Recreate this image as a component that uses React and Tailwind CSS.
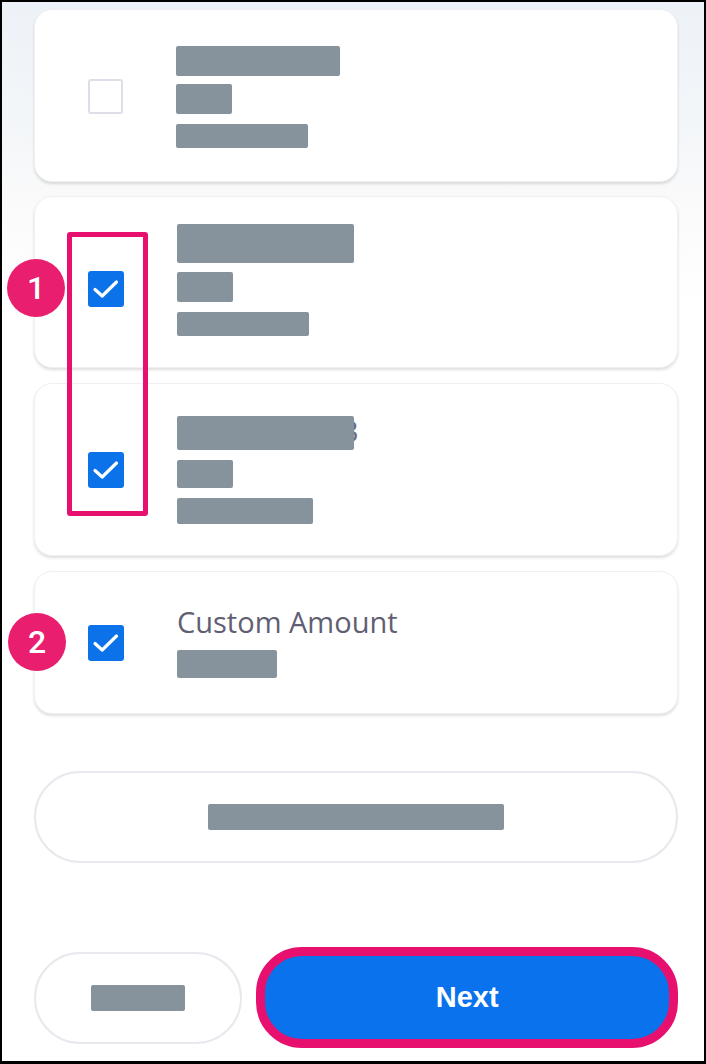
import React from "react";

const Bar = ({ w, h, className = "" }) => (
  <div className={`rounded-[2px] bg-[#87939c] ${className}`} style={{ width: w, height: h }} />
);

const Check = ({ checked }) =>
  checked ? (
    <div className="relative h-[36px] w-[36px] shrink-0 rounded-[3px] bg-[#0b72ea]">
      <svg className="absolute left-0 top-0 h-[36px] w-[36px]" width="36" height="36" viewBox="0 0 36 36" fill="none">
        <path d="M7 18.5L14.2 25L28.5 11" stroke="#ffffff" strokeWidth="3.2" strokeLinecap="round" strokeLinejoin="round" />
      </svg>
    </div>
  ) : (
    <div className="h-[35px] w-[35px] shrink-0 rounded-[3px] border-[2px] border-[#dedde8] bg-white" />
  );

const Card = ({ h, children }) => (
  <div
    className="flex rounded-[18px] border border-[#f0f0f3] bg-white pl-[53px] shadow-[0_2px_3px_rgba(0,0,0,0.13)]"
    style={{ height: h }}
  >
    {children}
  </div>
);

const Badge = ({ n, className }) => (
  <div
    className={`absolute flex h-[58px] w-[58px] items-center justify-center rounded-full bg-[#e91e6e] text-[32px] font-medium text-white ${className}`}
    style={{ fontFamily: 'Roboto, "Liberation Sans", Arial, sans-serif' }}
  >
    {n}
  </div>
);

export default function App() {
  return (
    <div
      className="relative h-[1064px] w-[706px] overflow-hidden border-[2px] border-b-[3px] border-black bg-[linear-gradient(180deg,#edf2f8_0px,#f3f6f9_120px,#fafafa_200px,#ffffff_300px)]"
      style={{ fontFamily: '"Open Sans", "Liberation Sans", sans-serif' }}
    >
      <div className="flex flex-col pl-[32px] pr-[26px] pt-[7px]">
        {/* Card 1 */}
        <Card h={173}>
          <div className="mt-[69px]">
            <Check checked={false} />
          </div>
          <div className="ml-[53px] flex flex-col pt-[36px]">
            <Bar w={164} h={30} />
            <Bar w={56} h={30} className="mt-[8px]" />
            <Bar w={132} h={24} className="mt-[10px]" />
          </div>
        </Card>

        {/* Card 2 */}
        <div className="mt-[14px]">
          <Card h={172}>
            <div className="mt-[74px]">
              <Check checked />
            </div>
            <div className="ml-[53px] flex flex-col pt-[27px]">
              <Bar w={177} h={39} />
              <Bar w={56} h={30} className="mt-[9px]" />
              <Bar w={132} h={24} className="mt-[10px]" />
            </div>
          </Card>
        </div>

        {/* Card 3 */}
        <div className="mt-[15px]">
          <Card h={173}>
            <div className="mt-[68px]">
              <Check checked />
            </div>
            <div className="ml-[53px] flex flex-col pt-[32px]">
              <div className="relative h-[34px] w-[177px]">
                <span className="absolute left-[165px] top-[-5px] text-[29px] leading-[40px] text-[#6b6b7d]">3</span>
                <Bar w={177} h={34} className="relative" />
              </div>
              <Bar w={56} h={28} className="mt-[10px]" />
              <Bar w={136} h={26} className="mt-[10px]" />
            </div>
          </Card>
        </div>

        {/* Card 4 */}
        <div className="mt-[15px]">
          <Card h={143}>
            <div className="mt-[53px]">
              <Check checked />
            </div>
            <div className="ml-[53px] flex flex-col pt-[30px]">
              <div className="text-[29px] leading-[39px] text-[#5f5e73]" style={{ fontFamily: '"Open Sans", sans-serif' }}>
                Custom Amount
              </div>
              <Bar w={100} h={28} className="mt-[9px]" />
            </div>
          </Card>
        </div>

        {/* Pill button */}
        <div className="mt-[57px] flex h-[92px] items-center justify-center rounded-full border-[2px] border-[#e8e8ee] bg-white">
          <Bar w={296} h={26} />
        </div>

        {/* Bottom buttons */}
        <div className="mt-[84px] flex items-center gap-[14px]">
          <div className="flex h-[92px] w-[209px] items-center justify-center rounded-full border-[2px] border-[#e8e8ee] bg-white">
            <Bar w={94} h={26} />
          </div>
          <div
            className="flex h-[101px] w-[423px] items-center justify-center rounded-[46px] border-[9px] border-[#e8106e] bg-[#0a72ec] text-[29px] font-bold text-white"
            style={{ fontFamily: '"Liberation Sans", Arial, sans-serif' }}
          >
            Next
          </div>
        </div>
      </div>

      {/* Annotations */}
      <div className="absolute left-[65px] top-[230px] h-[284px] w-[81px] rounded-[3px] border-[5px] border-[#e8106e]" />
      <Badge n="1" className="left-[5px] top-[257px]" />
      <Badge n="2" className="left-[6px] top-[611px]" />
    </div>
  );
}
